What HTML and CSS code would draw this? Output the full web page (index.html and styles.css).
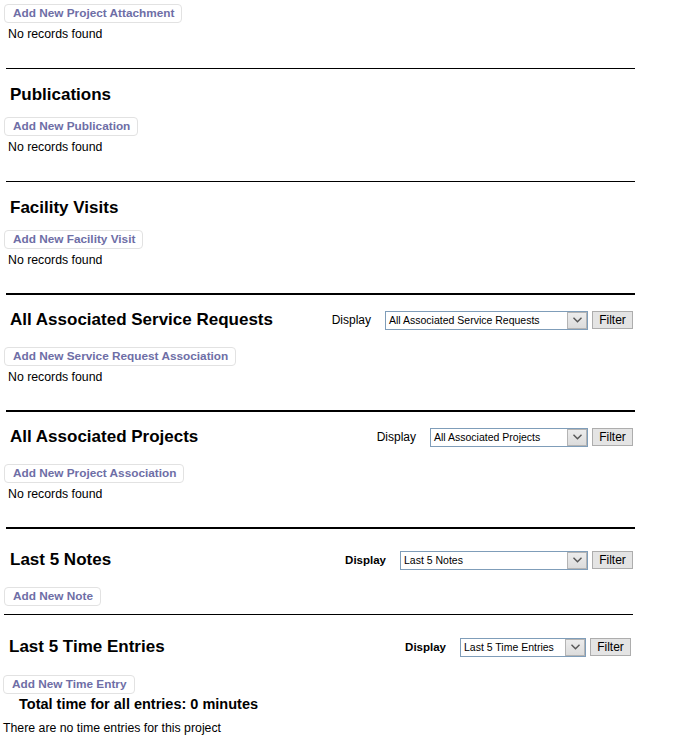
FILE: index.html
```html
<!DOCTYPE html>
<html>
<head>
<meta charset="utf-8">
<link rel="stylesheet" href="styles.css">
</head>
<body>
<div class="page">
  <section class="sec sec-first">
    <button class="add">Add New Project Attachment</button>
    <div class="empty">No records found</div>
  </section>
  <hr class="rule thin">

  <section class="sec">
    <div class="head"><h2>Publications</h2></div>
    <button class="add">Add New Publication</button>
    <div class="empty">No records found</div>
  </section>
  <hr class="rule thin">

  <section class="sec">
    <div class="head"><h2>Facility Visits</h2></div>
    <button class="add">Add New Facility Visit</button>
    <div class="empty">No records found</div>
  </section>
  <hr class="rule thick">

  <section class="sec sec-ctl">
    <div class="head">
      <h2>All Associated Service Requests</h2>
      <div class="controls">
        <span class="label">Display</span>
        <div class="select w-sr"><span class="sel-text">All Associated Service Requests</span><span class="sel-arrow"><svg width="9" height="6" viewBox="0 0 9 6"><path d="M0.5 0.8 L4.5 4.8 L8.5 0.8" fill="none" stroke="#555" stroke-width="1.4"/></svg></span></div>
        <button class="filter">Filter</button>
      </div>
    </div>
    <button class="add">Add New Service Request Association</button>
    <div class="empty">No records found</div>
  </section>
  <hr class="rule thick">

  <section class="sec sec-ctl">
    <div class="head">
      <h2>All Associated Projects</h2>
      <div class="controls">
        <span class="label">Display</span>
        <div class="select w-proj"><span class="sel-text">All Associated Projects</span><span class="sel-arrow"><svg width="9" height="6" viewBox="0 0 9 6"><path d="M0.5 0.8 L4.5 4.8 L8.5 0.8" fill="none" stroke="#555" stroke-width="1.4"/></svg></span></div>
        <button class="filter">Filter</button>
      </div>
    </div>
    <button class="add">Add New Project Association</button>
    <div class="empty">No records found</div>
  </section>
  <hr class="rule thick">

  <section class="sec sec-notes">
    <div class="head">
      <h2>Last 5 Notes</h2>
      <div class="controls">
        <span class="label bold">Display</span>
        <div class="select w-notes"><span class="sel-text">Last 5 Notes</span><span class="sel-arrow"><svg width="9" height="6" viewBox="0 0 9 6"><path d="M0.5 0.8 L4.5 4.8 L8.5 0.8" fill="none" stroke="#555" stroke-width="1.4"/></svg></span></div>
        <button class="filter">Filter</button>
      </div>
    </div>
    <button class="add">Add New Note</button>
  </section>
  <hr class="rule notes-rule">

  <section class="sec sec-time">
    <div class="head">
      <h2>Last 5 Time Entries</h2>
      <div class="controls">
        <span class="label bold">Display</span>
        <div class="select w-time"><span class="sel-text">Last 5 Time Entries</span><span class="sel-arrow"><svg width="9" height="6" viewBox="0 0 9 6"><path d="M0.5 0.8 L4.5 4.8 L8.5 0.8" fill="none" stroke="#555" stroke-width="1.4"/></svg></span></div>
        <button class="filter">Filter</button>
      </div>
    </div>
    <button class="add">Add New Time Entry</button>
    <div class="total">Total time for all entries: 0 minutes</div>
    <div class="none">There are no time entries for this project</div>
  </section>
</div>
</body>
</html>
```

FILE: styles.css
```css
* { box-sizing: border-box; }
html, body { margin: 0; padding: 0; background: #fff; }
body {
  font-family: "Liberation Sans", Arial, sans-serif;
  font-size: 12px;
  color: #000;
}
.page {
  width: 640px;
  padding: 4px 0 0 4px;
}
.sec { display: flex; flex-direction: column; align-items: flex-start; }
.add {
  display: block;
  font-family: "Liberation Sans", Arial, sans-serif;
  font-size: 11.8px;
  font-weight: bold;
  line-height: 15px;
  height: 19px;
  padding: 1px 7px 1px 8px;
  margin: 0;
  color: #6e6ea6;
  background: #fff;
  border: 1px solid #e2e2e2;
  border-radius: 4px;
}
.empty {
  margin: 4px 0 0 4px;
  line-height: 14px;
  font-size: 12.3px;
}
.rule {
  border: 0;
  margin: 0;
  background: #000;
  width: 629px;
  margin-left: 2px;
}
.thin { height: 1px; margin-top: 27px; }
.thick { height: 2px; margin-top: 26px; }
.notes-rule { height: 1px; margin-top: 8px; margin-left: 0; }

.head {
  display: flex;
  align-items: center;
  width: 629px;
  height: 20px;
  margin-top: 16px;
  margin-bottom: 12px;
}
.head h2 {
  flex: 1;
  margin: 0;
  padding-left: 6px;
  font-size: 17px;
  line-height: 20px;
  font-weight: bold;
}
.sec-ctl .head { margin-top: 15px; margin-bottom: 17px; }
.sec-notes .head { margin-top: 21px; margin-bottom: 17px; }
.sec-time .head { margin-top: 22px; margin-bottom: 18px; padding-right: 2px; }
.sec-time .head h2 { padding-left: 5px; }
.sec-time .add { margin-left: -1px; }

.controls { display: flex; align-items: center; }
.label { font-size: 12px; margin-right: 14px; }
.label.bold { font-weight: bold; font-size: 11.5px; }
.select {
  display: flex;
  height: 19px;
  border: 1px solid #7f9db9;
  background: #fff;
}
.sel-text {
  flex: 1;
  font-size: 10.5px;
  line-height: 17px;
  padding-left: 3px;
  white-space: nowrap;
  overflow: hidden;
}
.sel-arrow {
  width: 20px;
  margin: 0;
  background: linear-gradient(#ececec, #dcdcdc);
  border: 1px solid #b4b4b4;
  display: flex;
  align-items: center;
  justify-content: center;
}
.w-sr { width: 203px; }
.w-proj { width: 158px; }
.w-notes { width: 188px; }
.w-time { width: 126px; }
.filter {
  margin: 0 0 0 4px;
  height: 18px;
  width: 41px;
  padding: 0;
  font-family: "Liberation Sans", Arial, sans-serif;
  font-size: 12px;
  line-height: 16px;
  color: #000;
  background: #e4e4e4;
  border: 1px solid #adadad;
  border-radius: 0;
}
.total {
  margin: 2px 0 0 15px;
  font-size: 14.5px;
  line-height: 17px;
  font-weight: bold;
}
.none {
  margin: 8px 0 0 -1px;
  font-size: 12.3px;
  line-height: 14px;
}
```
